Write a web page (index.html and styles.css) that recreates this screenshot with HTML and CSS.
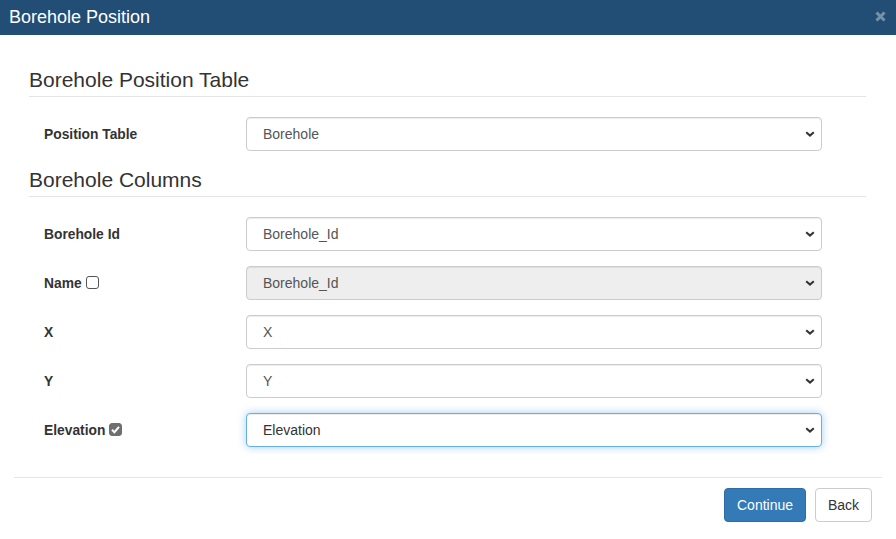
FILE: index.html
```html
<!DOCTYPE html>
<html>
<head>
<meta charset="utf-8">
<title>Borehole Position</title>
<link rel="stylesheet" href="styles.css">
</head>
<body>
<div class="modal">
  <div class="modal-header">
    <h3 class="modal-title">Borehole Position</h3>
    <span class="close"><svg viewBox="0 0 11 11" width="11" height="11"><path d="M1.5 1.5 L9.5 9.5 M9.5 1.5 L1.5 9.5" stroke="#7890a8" stroke-width="3" fill="none"/></svg></span>
  </div>
  <div class="modal-body">
    <div class="section">
      <h4 class="section-title first">Borehole Position Table</h4>
      <div class="form-row">
        <label class="form-label">Position Table</label>
        <div class="select-wrap">
          <select class="form-select"><option>Borehole</option></select>
          <svg class="chev" viewBox="0 0 10 6" width="10" height="6"><path d="M1.2 1.2 L5 4.6 L8.8 1.2" fill="none" stroke="#333" stroke-width="2"/></svg>
        </div>
      </div>
      <h4 class="section-title">Borehole Columns</h4>
      <div class="form-row">
        <label class="form-label">Borehole Id</label>
        <div class="select-wrap">
          <select class="form-select"><option>Borehole_Id</option></select>
          <svg class="chev" viewBox="0 0 10 6" width="10" height="6"><path d="M1.2 1.2 L5 4.6 L8.8 1.2" fill="none" stroke="#333" stroke-width="2"/></svg>
        </div>
      </div>
      <div class="form-row">
        <label class="form-label">Name <span class="cbox"></span></label>
        <div class="select-wrap">
          <select class="form-select disabled" disabled><option>Borehole_Id</option></select>
          <svg class="chev" viewBox="0 0 10 6" width="10" height="6"><path d="M1.2 1.2 L5 4.6 L8.8 1.2" fill="none" stroke="#333" stroke-width="2"/></svg>
        </div>
      </div>
      <div class="form-row">
        <label class="form-label">X</label>
        <div class="select-wrap">
          <select class="form-select"><option>X</option></select>
          <svg class="chev" viewBox="0 0 10 6" width="10" height="6"><path d="M1.2 1.2 L5 4.6 L8.8 1.2" fill="none" stroke="#333" stroke-width="2"/></svg>
        </div>
      </div>
      <div class="form-row">
        <label class="form-label">Y</label>
        <div class="select-wrap">
          <select class="form-select"><option>Y</option></select>
          <svg class="chev" viewBox="0 0 10 6" width="10" height="6"><path d="M1.2 1.2 L5 4.6 L8.8 1.2" fill="none" stroke="#333" stroke-width="2"/></svg>
        </div>
      </div>
      <div class="form-row last">
        <label class="form-label">Elevation <span class="cbox checked"><svg viewBox="0 0 13 13" width="13" height="13"><path d="M3 6.8 L5.4 9.2 L10 3.8" fill="none" stroke="#fff" stroke-width="2"/></svg></span></label>
        <div class="select-wrap">
          <select class="form-select focus"><option>Elevation</option></select>
          <svg class="chev" viewBox="0 0 10 6" width="10" height="6"><path d="M1.2 1.2 L5 4.6 L8.8 1.2" fill="none" stroke="#333" stroke-width="2"/></svg>
        </div>
      </div>
    </div>
    <div class="modal-footer">
      <button class="btn btn-primary">Continue</button>
      <button class="btn btn-default">Back</button>
    </div>
  </div>
</div>
</body>
</html>
```
FILE: styles.css
```css
* { box-sizing: border-box; }
html, body { margin: 0; padding: 0; background: #fff; }
body {
  font-family: "Liberation Sans", Arial, sans-serif;
  font-size: 14px;
  color: #333;
  width: 896px;
  height: 539px;
  overflow: hidden;
}
.modal { width: 896px; }
.modal-header {
  height: 35px;
  background: #224e76;
  display: flex;
  align-items: center;
  justify-content: space-between;
  padding: 0 10px 0 9px;
}
.modal-title {
  margin: 0;
  font-size: 18px;
  font-weight: normal;
  color: #fff;
  line-height: 1;
  position: relative;
  top: -1px;
}
.close {
  display: flex;
  line-height: 1;
  position: relative;
  top: -1px;
}
.modal-body { padding: 0 14px; }
.section { padding: 34px 16px 30px 15px; }
.section-title {
  margin: 0 0 20px 0;
  font-size: 21px;
  font-weight: normal;
  line-height: 22px;
  color: #333;
  padding-bottom: 5px;
  border-bottom: 1px solid #e5e5e5;
}
.form-row + .section-title { margin-top: 18px; }
.form-row {
  display: grid;
  grid-template-columns: 202px 576px;
  align-items: center;
  padding-left: 15px;
  margin-bottom: 15px;
}
.form-row.last { margin-bottom: 0; }
.form-label {
  font-weight: bold;
  font-size: 13.8px;
  color: #333;
  display: flex;
  align-items: center;
  gap: 4px;
}
.select-wrap { position: relative; height: 34px; }
.form-select {
  appearance: none;
  -webkit-appearance: none;
  width: 576px;
  height: 34px;
  border: 1px solid #ccc;
  border-radius: 4px;
  background: #fff;
  font-family: "Liberation Sans", Arial, sans-serif;
  font-size: 14px;
  color: #555;
  padding: 0 30px 0 16px;
  margin: 0;
  box-shadow: inset 0 1px 1px rgba(0,0,0,.075);
  outline: none;
}
.form-select.disabled { background: #eee; opacity: 1; color: #555; }
.form-select.focus {
  border-color: #66afe9;
  box-shadow: inset 0 1px 1px rgba(0,0,0,.075), 0 0 8px rgba(102,175,233,.6);
  color: #333;
}
.chev {
  position: absolute;
  right: 7px;
  top: 14px;
  pointer-events: none;
}
.cbox {
  display: inline-block;
  width: 13px;
  height: 13px;
  border: 1px solid #555;
  border-radius: 3px;
  background: #fff;
  position: relative;
  top: -1px;
}
.cbox.checked {
  background: #6f6f6f;
  border-color: #6f6f6f;
}
.cbox.checked svg { position: absolute; left: -1px; top: -1px; }
.modal-footer {
  border-top: 1px solid #e5e5e5;
  padding: 10px;
  display: flex;
  justify-content: flex-end;
  gap: 9px;
}
.btn {
  height: 34px;
  padding: 0 12px;
  font-family: "Liberation Sans", Arial, sans-serif;
  font-size: 14px;
  border-radius: 4px;
  border: 1px solid #ccc;
  line-height: 1;
}
.btn-primary { background: #337ab7; border-color: #2e6da4; color: #fff; width: 82px; }
.btn-default { background: #fff; color: #333; width: 57px; }
```
